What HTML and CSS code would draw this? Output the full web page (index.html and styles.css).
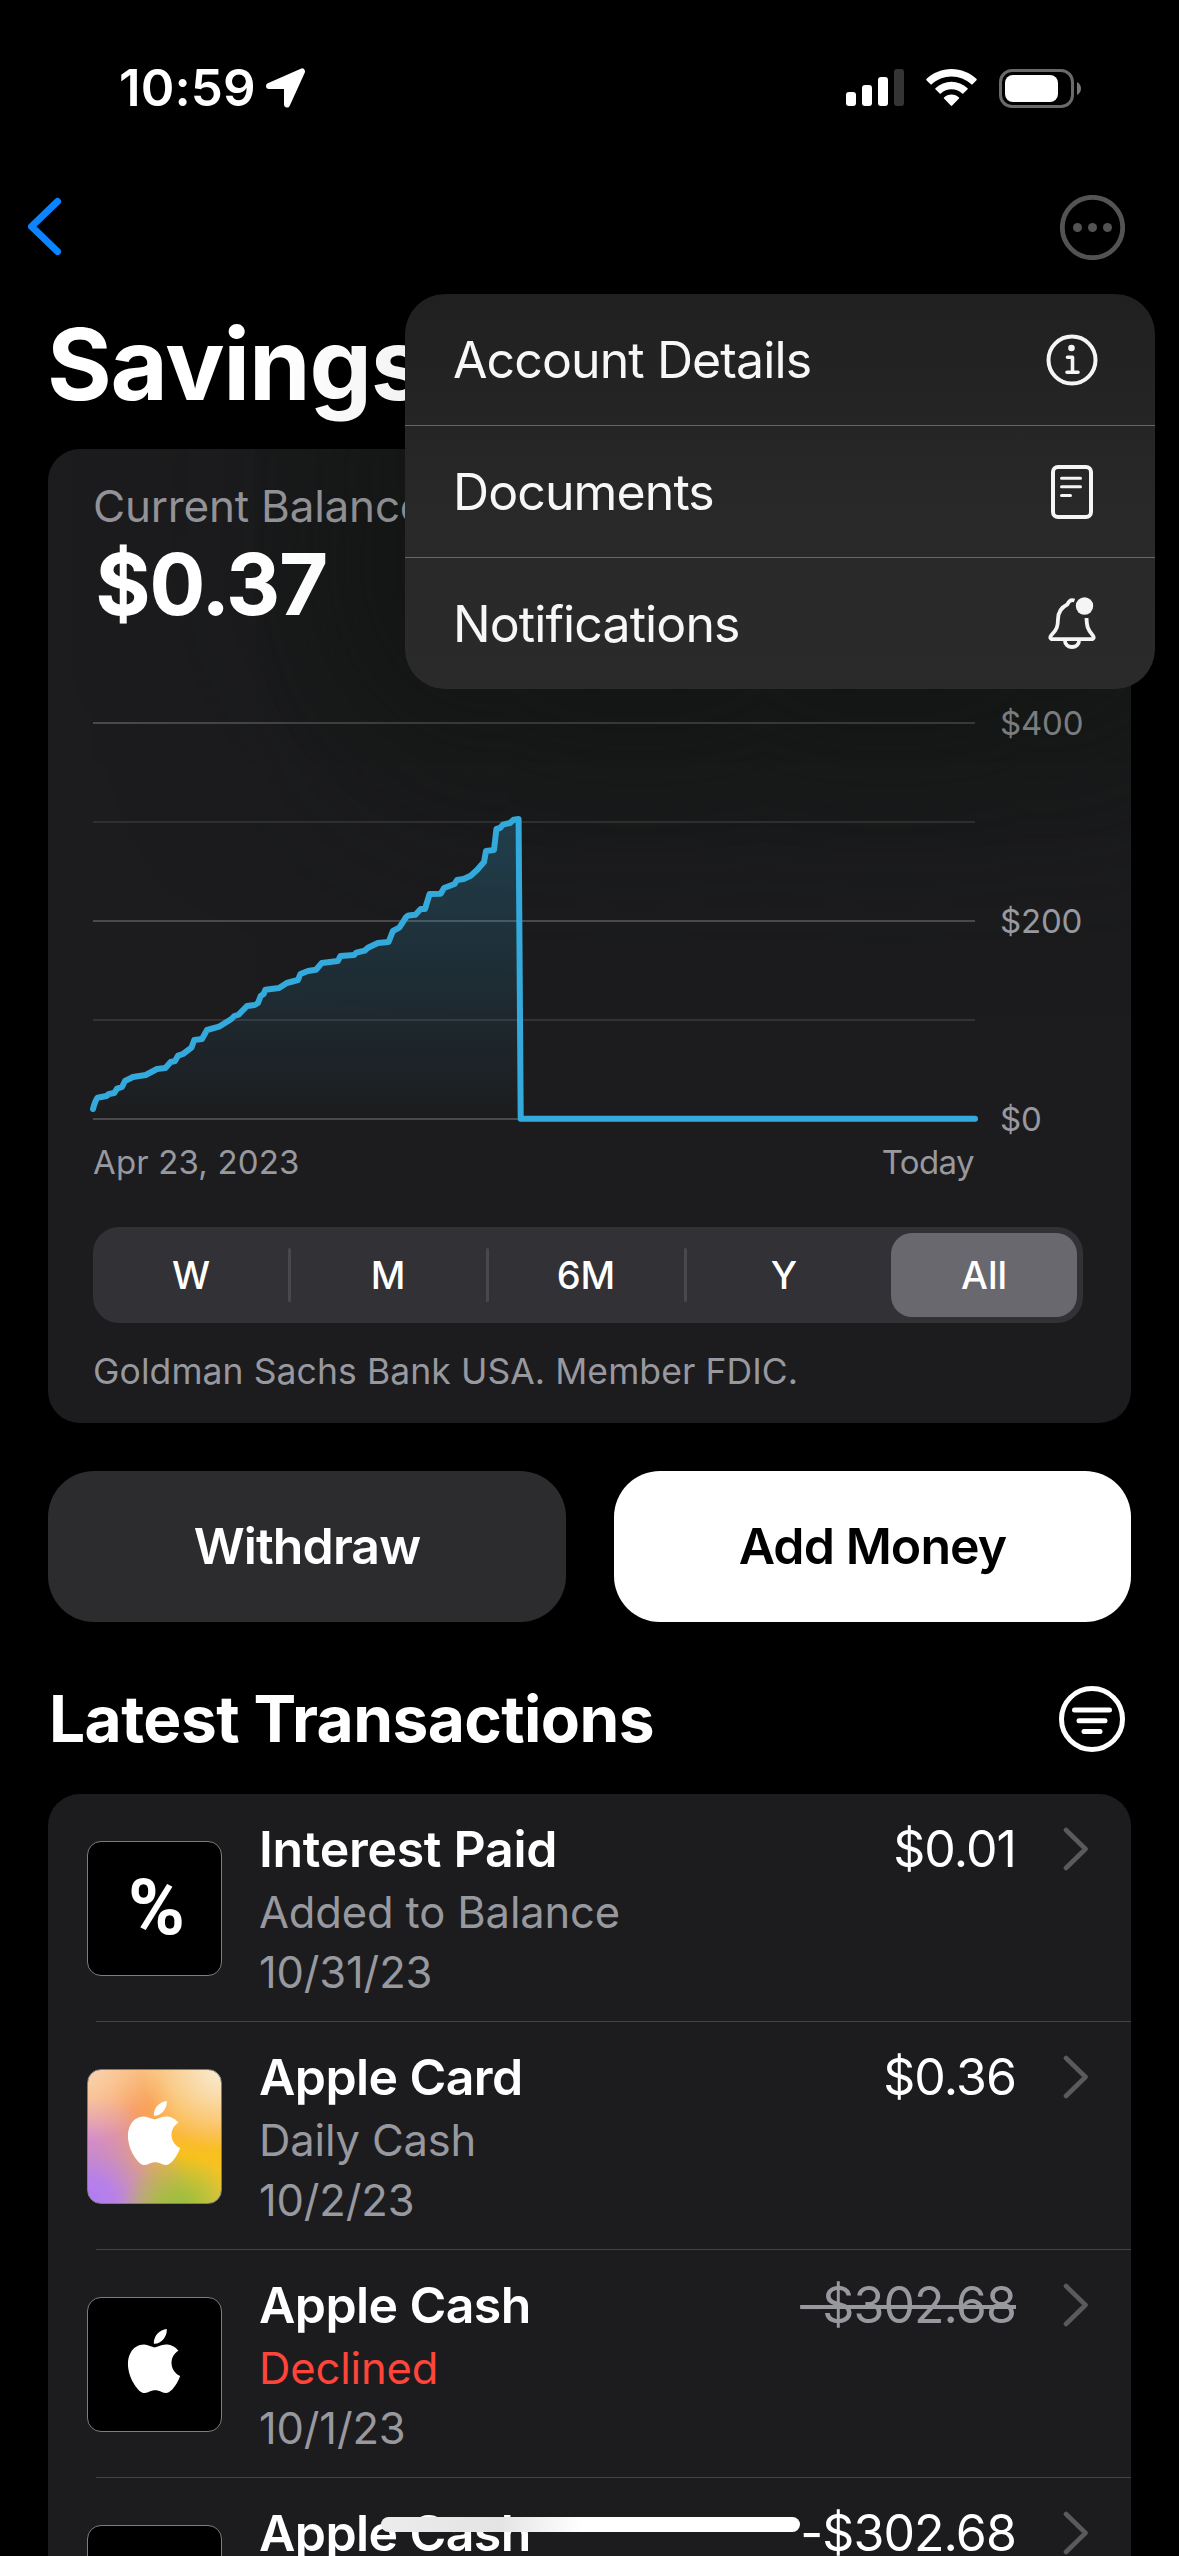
FILE: index.html
```html
<!DOCTYPE html>
<html lang="en">
<head>
<meta charset="utf-8">
<title>Savings</title>
<link rel="stylesheet" href="styles.css">
</head>
<body>
<svg class="defs" aria-hidden="true">
  <symbol id="apple" viewBox="0 0 24 24"><path fill="#fff" d="M12.152 6.896c-.948 0-2.415-1.078-3.96-1.04-2.04.027-3.91 1.183-4.961 3.014-2.117 3.675-.546 9.103 1.519 12.09 1.013 1.454 2.208 3.09 3.792 3.039 1.52-.065 2.09-.987 3.935-.987 1.831 0 2.35.987 3.96.948 1.637-.026 2.676-1.48 3.676-2.948 1.156-1.688 1.636-3.325 1.662-3.415-.039-.013-3.182-1.221-3.22-4.857-.026-3.04 2.48-4.494 2.597-4.559-1.429-2.09-3.623-2.324-4.39-2.376-2-.156-3.675 1.09-4.61 1.09zM15.53 3.83c.843-1.012 1.4-2.427 1.245-3.83-1.207.052-2.662.805-3.532 1.818-.78.896-1.454 2.338-1.273 3.714 1.338.104 2.715-.688 3.559-1.701"/></symbol>
  <symbol id="chevron" viewBox="0 0 26 44"><path d="M3 3 22.5 22 3 41" fill="none" stroke="#5a5a5d" stroke-width="4.6" stroke-linecap="round" stroke-linejoin="round"/></symbol>
</svg>
<div class="screen">
  <header class="status">
    <div class="status-left">
      <span class="time">10:59</span>
      <svg width="40" height="40" viewBox="0 0 40 40"><path d="M3 18 36 3.400 21 36.500V18Z" fill="#fff" stroke="#fff" stroke-width="6" stroke-linejoin="round"/></svg>
    </div>
    <div class="status-right">
      <svg width="58" height="38" viewBox="0 0 58 38"><g fill="#fff"><rect y="23" width="10" height="14" rx="3"/><rect x="16" y="16" width="10" height="21" rx="3"/><rect x="32" y="8" width="10" height="29" rx="3"/></g><rect x="48" width="10" height="37" rx="3" fill="#343434"/></svg>
      <svg class="wifi" width="51" height="38" viewBox="0 0 51 38"><path fill="#fff" d="M25.500 0C35 0 44 3.800 50.600 10Q51 10.700 50.500 11.200L46.500 15.300Q46 15.700 45.300 15.200C40 10.200 33 7.400 25.500 7.400S11 10.200 5.700 15.200Q5 15.700 4.500 15.300L.5 11.200Q0 10.700 .4 10C7 3.800 16 0 25.500 0ZM25.500 12.800C31.500 12.800 37 15 41.600 19.200Q42 19.700 41.600 20.300L37.300 24.600Q36.700 25 36.100 24.500C33 21.700 29.400 20.300 25.500 20.300S18 21.700 14.900 24.500Q14.300 25 13.700 24.600L9.400 20.300Q9 19.700 9.400 19.200C14 15 19.500 12.800 25.500 12.800ZM25.500 25.600C28.400 25.600 31 26.700 33 28.400Q33.500 29 33 29.600L26.200 36.600Q25.500 37.200 24.800 36.600L18 29.600Q17.500 29 18 28.400C20 26.700 22.600 25.600 25.500 25.600Z"/></svg>
      <svg width="83" height="39" viewBox="0 0 83 39"><rect x="1.500" y="1.500" width="72" height="36" rx="11.500" fill="none" stroke="#6a6a6a" stroke-width="3"/><rect x="6" y="6" width="53" height="27" rx="8" fill="#fff"/><path d="M78 13Q82 15.500 82 19.500T78 26Z" fill="#777"/></svg>
    </div>
  </header>

  <nav class="nav">
    <svg width="36" height="60" viewBox="0 0 36 60"><path d="M30.500 4.500 4.500 29.500 30.500 54.500" fill="none" stroke="#0a84ff" stroke-width="7" stroke-linecap="round" stroke-linejoin="round"/></svg>
    <svg width="65" height="65" viewBox="0 0 65 65"><circle cx="32.500" cy="32.500" r="30.200" fill="none" stroke="#555553" stroke-width="4.800"/><g fill="#555553"><circle cx="17.500" cy="32.500" r="4.500"/><circle cx="32.500" cy="32.500" r="4.500"/><circle cx="47.500" cy="32.500" r="4.500"/></g></svg>
  </nav>

  <main>
    <h1 class="title">Savings</h1>

    <section class="card balance-card">
      <div class="label">Current Balance</div>
      <div class="balance">$0.37</div>
      <div class="chart">
        <svg class="plot" width="882" height="400" viewBox="0 0 882 400">
          <defs>
            <linearGradient id="area" x1="0" y1="97" x2="0" y2="397" gradientUnits="userSpaceOnUse"><stop offset="0" stop-color="#34aadc" stop-opacity=".26"/><stop offset="1" stop-color="#34aadc" stop-opacity="0"/></linearGradient>
            <linearGradient id="topline" x1="0" y1="0" x2="1" y2="0"><stop offset="0" stop-color="#4a4a4c"/><stop offset=".4" stop-color="#393b3a"/><stop offset="1" stop-color="#3a3c3b"/></linearGradient>
          </defs>
          <rect y="0" width="882" height="2" fill="url(#topline)"/>
          <rect y="99" width="882" height="2" fill="#2e2f2f"/>
          <rect y="198" width="882" height="2" fill="#49494b"/>
          <rect y="297" width="882" height="2" fill="#323234"/>
          <rect y="396" width="882" height="2" fill="#4a4a4c"/>
          <path fill="url(#area)" d="M0 387 4.500 375.700 13.400 374 21.300 371 24 366.700 29 365 32 359 40 355 52.700 353 64 347 72.400 346 77.700 340 82 339 85 333.700 90 332 98.400 325.700 101.300 318 109 317 114 308 126 304.700 138.400 297 145.600 292.700 154 284 165 281 167.700 274 172.400 267.700 186 266 193.800 261 205 258 207.400 252 223 247.700 228.800 241 244.900 239 247.400 234 261 233 271.600 228.700 284.900 221 295.600 220 299.900 209 306.300 205.700 313.400 194.700 322.400 192.700 327.700 187 332 187 336.600 172 347.700 171.700 351 166 361.600 162 364 158 370.600 157 377.700 153.700 384 148 391 140 393 129 401 128 403.400 107 409.900 102.700 417 101 420.600 97.700 425.600 97 427.700 397H0Z"/>
          <path class="line" d="M0 387Q2 379 4.500 375.700L13.400 374 16 372 21.300 371 24 366.700 29 365 32 359 40 355 52.700 353 64 347 72.400 346 77.700 340 82 339 85 333.700 90 332 98.400 325.700 101.300 318 109 317 114 308 126 304.700 138.400 297 141.300 294 145.600 292.700 154 284 161.600 283 165 281 167.700 274 170.600 272 172.400 267.700 186 266 193.800 261 205 258 207.400 252 215 249 223 247.700 228.800 241 244.900 239 247.400 234 261 233 263.400 230.700 271.600 228.700 274.900 225.700 284.900 221 295.600 220 299.900 209 306.300 205.700 313.400 194.700 315.500 193.400 322.400 192.700 327.700 187 332 187 336.600 172 347.700 171.700 351 166 361.600 162 364 158 370.600 157 377.700 153.700 384 148 391 140 393 129 401 128 403.400 107 407 106 409.900 102.700 417 101 420.600 97.700 425.600 97 427.700 396.700H882"/>
        </svg>
        <div class="y-axis"><span class="dim">$400</span><span>$200</span><span>$0</span></div>
      </div>
      <div class="x-axis"><span>Apr 23, 2023</span><span class="today">Today</span></div>
      <div class="segments">
        <span class="segment">W</span><span class="segment">M</span><span class="segment">6M</span><span class="segment">Y</span><span class="segment selected">All</span>
      </div>
      <div class="footnote">Goldman Sachs Bank USA. Member FDIC.</div>
    </section>

    <div class="actions">
      <button class="button">Withdraw</button>
      <button class="button primary">Add Money</button>
    </div>

    <div class="section-head">
      <h2>Latest Transactions</h2>
      <svg width="66" height="66" viewBox="0 0 66 66" fill="none" stroke="#fff" stroke-width="5" stroke-linecap="round"><circle cx="33" cy="33" r="30.500"/><path d="M15.500 24H50.500M20 34.700H46M25 45.500H41"/></svg>
    </div>

    <section class="card list">
      <article class="row">
        <div class="thumb"><span class="percent">%</span></div>
        <div class="info"><h3 class="wide">Interest Paid</h3><p>Added to Balance</p><p class="date">10/31/23</p></div>
        <div class="amount">$0.01</div>
        <svg class="chev" width="26" height="44"><use href="#chevron"/></svg>
      </article>
      <article class="row">
        <div class="thumb rainbow"><svg class="logo" width="64" height="64"><use href="#apple"/></svg></div>
        <div class="info"><h3>Apple Card</h3><p>Daily Cash</p><p class="date">10/2/23</p></div>
        <div class="amount">$0.36</div>
        <svg class="chev" width="26" height="44"><use href="#chevron"/></svg>
      </article>
      <article class="row">
        <div class="thumb"><svg class="logo" width="64" height="64"><use href="#apple"/></svg></div>
        <div class="info"><h3>Apple Cash</h3><p class="declined">Declined</p><p class="date">10/1/23</p></div>
        <div class="amount struck">-$302.68</div>
        <svg class="chev" width="26" height="44"><use href="#chevron"/></svg>
      </article>
      <article class="row">
        <div class="thumb"></div>
        <div class="info"><h3>Apple Cash</h3></div>
        <div class="amount">-$302.68</div>
        <svg class="chev" width="26" height="44"><use href="#chevron"/></svg>
      </article>
    </section>
  </main>

  <div class="menu">
    <div class="menu-item"><span>Account Details</span>
      <svg width="54" height="54" viewBox="0 0 54 54"><circle cx="27" cy="27" r="23.500" fill="none" stroke="#f5f5f5" stroke-width="4"/><circle cx="26.500" cy="15" r="3.300" fill="#f5f5f5"/><path d="M22.500 24.200H27.500V39M22 39.200H33" fill="none" stroke="#f5f5f5" stroke-width="3.600" stroke-linecap="round" stroke-linejoin="round"/></svg>
    </div>
    <div class="menu-item"><span>Documents</span>
      <svg width="54" height="54" viewBox="0 0 54 54" fill="none" stroke="#f5f5f5"><rect x="8" y="2" width="38" height="50" rx="5" stroke-width="4"/><path d="M16.500 13.200H35.500M16.500 21.800H35.500M16.500 30.500H25.500" stroke-width="3" stroke-linecap="round"/></svg>
    </div>
    <div class="menu-item"><span>Notifications</span>
      <svg width="54" height="54" viewBox="0 0 54 54" fill="none" stroke="#f5f5f5" stroke-width="3.800" stroke-linecap="round" stroke-linejoin="round"><path stroke-linecap="butt" d="M29.500 3.500C26 2.300 23.500 4.500 22.300 7.500C16 10.500 13.200 15 13 22C12.900 29 12 32.500 6.500 38C4.500 40.300 5 42.200 8 42.200H46C49 42.200 49.500 40.300 47.500 38C42.500 32.500 41.800 29 41.500 21"/><path stroke-linecap="butt" d="M19.800 43C20 52.300 34 52.300 34.200 43"/><circle cx="39.500" cy="9" r="8.700" fill="#f5f5f5" stroke="none"/></svg>
    </div>
  </div>
  <div class="home-indicator"></div>
</div>
</body>
</html>
```
FILE: styles.css
```css
* { box-sizing: border-box; margin: 0; padding: 0; }
body { background: #000; color: #fff; font-family: Inter, "Liberation Sans", sans-serif; }
svg { display: block; flex: none; }
.defs { position: absolute; width: 0; height: 0; }

.screen { position: relative; width: 1179px; height: 2556px; overflow: hidden; background: #000; }

.status { height: 176px; padding: 0 97px 0 119px; display: flex; justify-content: space-between; align-items: center; }
.status-left { display: flex; align-items: center; gap: 10px; }
.time { font-size: 51px; font-weight: 600; letter-spacing: .1px; line-height: 60px; }
.status-right { display: flex; align-items: center; gap: 22px; }

.nav { height: 104px; padding: 0 54px 2px 27px; display: flex; justify-content: space-between; align-items: center; }

main { padding: 0 48px; }
.title { height: 169px; margin-left: -1px; font-size: 99px; font-weight: 700; line-height: 169px; letter-spacing: -1.2px; }

.card { background: #1c1c1e; border-radius: 32px; }
.balance-card { position: relative; height: 974px; padding: 27px 48px 0 45px; overflow: hidden; isolation: isolate; }
/* shade the card around the open menu */
.balance-card::before {
  content: ""; position: absolute; z-index: -1; left: 357px; top: -155px; width: 750px; height: 395px;
  border-radius: 38px; background: #141614; box-shadow: 0 0 220px 70px #121512;
}
.label { font-size: 44px; line-height: 60px; color: #929297; letter-spacing: -.2px; }
.balance { font-size: 83px; line-height: 96px; font-weight: 600; padding-left: 3px; -webkit-text-stroke: 2px #fff; }
.chart { margin-top: 66px; height: 446px; display: flex; justify-content: space-between; }
.plot { margin-top: 24px; overflow: visible; }
.line { fill: none; stroke: #34aadc; stroke-width: 6; stroke-linecap: round; stroke-linejoin: round; }
.y-axis { width: 83px; display: flex; flex-direction: column; justify-content: space-between; font-size: 33px; line-height: 50px; color: #98989f; letter-spacing: -.2px; }
.y-axis .dim { color: #7f8081; }
.x-axis { width: 881px; height: 37px; display: flex; justify-content: space-between; font-size: 33px; line-height: 37px; color: #98989f; letter-spacing: .15px; }
.today { letter-spacing: -.6px; }
.segments { margin-top: 46px; height: 96px; padding: 6px 6px 6px 0; background: #323136; border-radius: 26px; display: grid; grid-template-columns: 196px 198px 198px 206px 186px; }
.segment { position: relative; display: flex; align-items: center; justify-content: center; font-size: 38px; font-weight: 450; line-height: 48px; }
.segment:nth-child(4) { padding-right: 8px; }
.segment:nth-child(-n+3)::after { content: ""; position: absolute; right: -2px; top: 15px; width: 3px; height: 54px; border-radius: 2px; background: #49484d; }
.selected { background: #69686e; border-radius: 21px; font-weight: 550; }
.footnote { font-size: 35.500px; line-height: 98px; color: #98989f; letter-spacing: .08px; white-space: nowrap; }

.actions { margin-top: 48px; display: grid; grid-template-columns: 518px 517px; gap: 48px; }
.button { height: 151px; border: 0; border-radius: 46px; background: #2c2c2e; color: #fff; font: 600 50px/151px Inter, sans-serif; letter-spacing: -.9px; }
.primary { background: #fff; color: #000; }

.section-head { height: 172px; padding: 22px 6px 0 1px; display: flex; align-items: center; justify-content: space-between; }
.section-head h2 { font-size: 64px; font-weight: 700; line-height: 80px; letter-spacing: -.6px; }

.list { height: 900px; }
.row { position: relative; height: 228px; display: flex; align-items: flex-start; padding: 0 42px 0 39px; }
.row:not(:last-child)::after { content: ""; position: absolute; left: 48px; right: 0; bottom: 0; height: 1px; background: #434346; }
.thumb { width: 135px; height: 135px; margin-top: 47px; border: 1px solid #7d7d80; border-radius: 14px; background: #000; display: flex; align-items: center; justify-content: center; }
.rainbow { background:
  radial-gradient(circle at 100% 0, #f9ecd0 0, rgba(249,225,170,0) 42%),
  radial-gradient(circle at 0 0, rgba(250,210,185,.9) 0, rgba(250,200,160,0) 38%),
  radial-gradient(circle at 68% 106%, #94bc44 0, rgba(160,190,60,.85) 12%, rgba(200,190,50,0) 34%),
  radial-gradient(circle at 0 100%, #b07bf8 0, rgba(181,125,240,.95) 14%, rgba(200,130,215,.6) 34%, rgba(240,150,130,0) 56%),
  radial-gradient(circle at 0 50%, rgba(225,150,200,.9) 0, rgba(240,150,150,0) 36%),
  radial-gradient(circle at 34% 30%, #f7985c 0, rgba(250,160,80,0) 36%),
  linear-gradient(#f9bd72, #fcb63c 45%, #f8c11c 65%, #e8c63e); }
.logo { position: relative; left: -1px; top: -4px; }
.percent { font-family: Roboto, sans-serif; font-size: 77px; font-weight: 700; line-height: 135px; position: relative; left: 2px; top: 0; }
.info { padding: 24px 0 0 37px; }
h3 { font-size: 50px; font-weight: 600; line-height: 63px; letter-spacing: -.6px; }
h3.wide { letter-spacing: -.3px; }
.info p { font-size: 43.500px; line-height: 62px; color: #98989f; letter-spacing: -.15px; }
.info .date { line-height: 58px; }
.info .declined { color: #ff453a; }
.amount { margin: 0 -2px 0 auto; padding-top: 24px; font-size: 50px; line-height: 63px; letter-spacing: -.9px; }
.struck { color: #98989f; text-decoration: line-through; text-decoration-thickness: 3.500px; }
.chev { margin: 33px 0 0 49px; }

.menu { position: absolute; left: 405px; top: 294px; width: 750px; height: 395px; border-radius: 40px; overflow: hidden; background: linear-gradient(#202020, #292929 60%, #2a2a2a); box-shadow: 0 0 150px 40px rgba(0,0,0,.07); color: #f7f7f7; }
.menu-item { height: 132px; padding: 0 56px 0 48px; display: flex; justify-content: space-between; align-items: center; font-size: 50px; border-bottom: 1px solid #666; letter-spacing: -.9px; }
.menu-item:last-child { border: 0; height: 131px; }

.home-indicator { position: absolute; left: 381px; top: 2517px; width: 419px; height: 15px; border-radius: 8px; background: linear-gradient(90deg, #ececec, #e4e4e4 28%, #fff 48%); }
```
